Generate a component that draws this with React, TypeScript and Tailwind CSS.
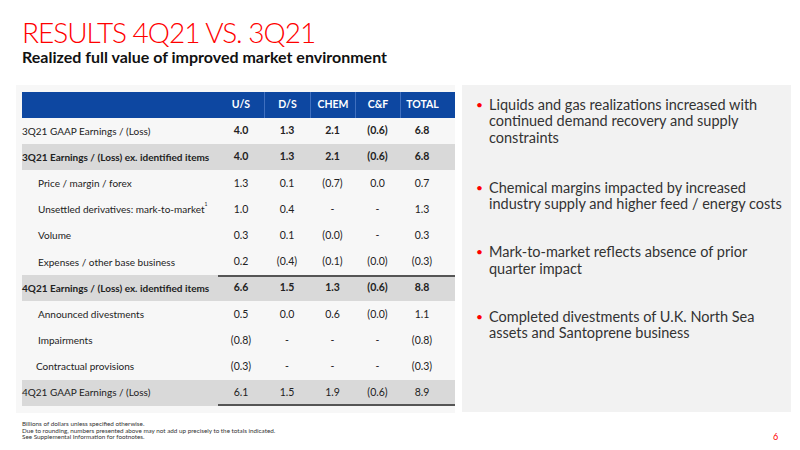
import React from "react";

type Row = {
  label: React.ReactNode;
  vals: string[];
  indent?: number;
  shaded?: boolean;
  bold?: boolean;
  boldVals?: boolean;
  topLine?: boolean;
  bottomLine?: boolean;
};

const rows: Row[] = [
  { label: "3Q21 GAAP Earnings / (Loss)", vals: ["4.0", "1.3", "2.1", "(0.6)", "6.8"], boldVals: true },
  { label: "3Q21 Earnings / (Loss) ex. identified items", vals: ["4.0", "1.3", "2.1", "(0.6)", "6.8"], shaded: true, bold: true, boldVals: true },
  { label: "Price / margin / forex", vals: ["1.3", "0.1", "(0.7)", "0.0", "0.7"], indent: 1 },
  {
    label: (
      <>
        Unsettled derivatives: mark-to-market<sup className="text-[5px] align-super">1</sup>
      </>
    ),
    vals: ["1.0", "0.4", "-", "-", "1.3"],
    indent: 1,
  },
  { label: "Volume", vals: ["0.3", "0.1", "(0.0)", "-", "0.3"], indent: 1 },
  { label: "Expenses / other base business", vals: ["0.2", "(0.4)", "(0.1)", "(0.0)", "(0.3)"], indent: 1 },
  { label: "4Q21 Earnings / (Loss) ex. identified items", vals: ["6.6", "1.5", "1.3", "(0.6)", "8.8"], shaded: true, bold: true, boldVals: true, topLine: true },
  { label: "Announced divestments", vals: ["0.5", "0.0", "0.6", "(0.0)", "1.1"], indent: 1 },
  { label: "Impairments", vals: ["(0.8)", "-", "-", "-", "(0.8)"], indent: 1 },
  { label: "Contractual provisions", vals: ["(0.3)", "-", "-", "-", "(0.3)"], indent: 2 },
  { label: "4Q21 GAAP Earnings / (Loss)", vals: ["6.1", "1.5", "1.9", "(0.6)", "8.9"], shaded: true, bottomLine: true },
];

const cols = "grid grid-cols-[196px_46px_46px_45px_45px_44px]";

export default function App() {
  return (
    <div
      className="w-[800px] h-[450px] bg-white relative overflow-hidden text-[#222]"
      style={{ fontFamily: "Lato, 'Open Sans', sans-serif" }}
    >
      <div className="pl-[22px] pt-[17px]">
        <div className="text-[28px] leading-[30px] text-[#ff0000] font-light tracking-[-1px]">RESULTS 4Q21 VS. 3Q21</div>
        <div className="text-[16px] leading-[20px] font-bold text-[#111] mt-[0px]">
          Realized full value of improved market environment
        </div>
      </div>

      <div className="flex mt-[18px] pl-[16px] gap-[7px]">
        <div className="w-[439px] h-[328px] bg-[#f7f7f7] pl-[6px] pt-[7px]">
          <div className={`${cols} h-[26px] bg-[#0d47a1] text-white font-bold text-[10.5px] items-center`}>
            <div></div>
            {["U/S", "D/S", "CHEM", "C&F", "TOTAL"].map((h, i) => (
              <div
                key={h}
                className={`h-full flex items-center justify-center ${i > 0 ? "border-l border-[#3f6fbf]" : ""}`}
              >
                {h}
              </div>
            ))}
          </div>
          {rows.map((r, idx) => (
            <div
              key={idx}
              className={`${cols} h-[26.2px] items-center text-[10px] ${r.shaded ? "bg-[#d9d9d9]" : ""} relative`}
            >
              {r.topLine && <div className="absolute left-[196px] right-0 top-0 h-[2px] bg-[#555]" />}
              {r.bottomLine && <div className="absolute left-[196px] right-0 bottom-0 h-[2px] bg-[#555]" />}
              <div
                className={`whitespace-nowrap ${r.bold ? "font-bold" : ""} ${
                  r.indent === 1 ? "pl-[16px]" : r.indent === 2 ? "pl-[14px]" : ""
                }`}
              >
                {r.label}
              </div>
              {r.vals.map((v, i) => (
                <div key={i} className={`text-center text-[10.5px] ${r.boldVals ? "font-bold" : ""}`}>
                  {v}
                </div>
              ))}
            </div>
          ))}
        </div>

        <div className="w-[329px] h-[327px] bg-[#f2f2f2] pl-[14px] pt-[12px] text-[14.5px] leading-[16.3px] text-[#333]">
          {[
            "Liquids and gas realizations increased with continued demand recovery and supply constraints",
            "Chemical margins impacted by increased industry supply and higher feed / energy costs",
            "Mark-to-market reflects absence of prior quarter impact",
            "Completed divestments of U.K. North Sea assets and Santoprene business",
          ].map((t, i) => (
            <div key={i} className={`flex ${i === 1 ? "mt-[34px]" : i > 1 ? "mt-[32px]" : ""}`}>
              <span className="w-[13px] shrink-0 text-[#ff0000] text-[12px]">•</span>
              <span>{t}</span>
            </div>
          ))}
        </div>
      </div>

      <div className="pl-[22px] mt-[8px] text-[6.3px] leading-[6.6px] text-[#333]">
        <div>Billions of dollars unless specified otherwise.</div>
        <div>Due to rounding, numbers presented above may not add up precisely to the totals indicated.</div>
        <div>See Supplemental Information for footnotes.</div>
      </div>
      <div className="absolute left-[773px] top-[430px] text-[9px] text-[#ff0000]">6</div>
    </div>
  );
}
